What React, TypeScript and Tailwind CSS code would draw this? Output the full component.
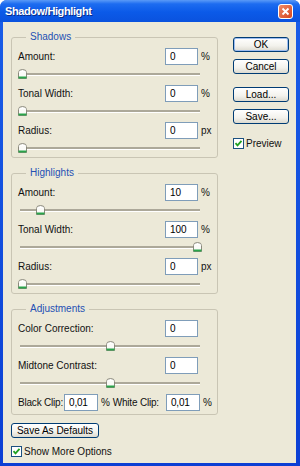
import React from "react";

const font = { fontFamily: '"Liberation Sans", Arial, sans-serif' };

function Thumb({ pct }: { pct: number }) {
  return (
    <svg
      className="absolute top-[4px]"
      style={{ left: (pct * 175) / 100 }}
      width="9"
      height="10"
      viewBox="0 0 9 10"
    >
      <path d="M0.5 9.5 V3.5 Q0.5 0.5 4.5 0.5 Q8.5 0.5 8.5 3.5 V9.5 Z" fill="#fbfbf8" stroke="#8a897c" />
      <rect x="0.5" y="7.5" width="8" height="2" fill="#2aa44a" />
      <rect x="1.5" y="2" width="6" height="1" fill="#ffffff" />
    </svg>
  );
}

function Slider({ pct }: { pct: number }) {
  return (
    <div className="relative h-[18px] w-[184px]">
      <div className="mx-[2px] mt-[8px] h-[3px] border-b border-white bg-[#aca899]" />
      <Thumb pct={pct} />
    </div>
  );
}

function Field({ value, w = "w-[33px]" }: { value: string; w?: string }) {
  return (
    <div className={`${w} flex h-[17px] shrink-0 items-center border border-[#7f9db9] bg-white pl-[4px] text-[10px] text-black`}>
      {value}
    </div>
  );
}

function Item({ label, value, unit, pct }: { label: string; value: string; unit?: string; pct: number }) {
  return (
    <div className="flex flex-col">
      <div className="flex h-[17px] items-center">
        <span className="flex-1 text-[10px] text-[#111]">{label}</span>
        <Field value={value} />
        <span className="w-[19px] pl-[3px] text-[10px] text-[#111]">{unit}</span>
      </div>
      <Slider pct={pct} />
    </div>
  );
}

function Group({ title, children, last }: { title: string; children: React.ReactNode; last?: boolean }) {
  return (
    <fieldset className={`rounded-[3px] border border-[#c9c5b4] pl-[6px] ${last ? "pb-[3px]" : ""}`}>
      <legend className="ml-[8px] px-[4px] text-[10px] leading-[12px] text-[#2450b4]">{title}</legend>
      <div className="mt-[5px] flex flex-col gap-[2px]">{children}</div>
    </fieldset>
  );
}

function Button({ label, def, w = "w-[56px]" }: { label: string; def?: boolean; w?: string }) {
  return (
    <div
      className={`${w} flex h-[15px] items-center justify-center rounded-[3px] border border-[#003c74] bg-[linear-gradient(to_bottom,#ffffff,#f3f2ec_60%,#dcdad0)] text-[10px] text-black ${
        def ? "shadow-[inset_0_0_0_1px_#9dbdf0]" : ""
      }`}
    >
      {label}
    </div>
  );
}

function Check({ label }: { label: string }) {
  return (
    <div className="flex items-center gap-[2px]">
      <div className="flex h-[11px] w-[11px] items-center justify-center border border-[#1c5180] bg-white">
        <svg width="9" height="9" viewBox="0 0 9 9">
          <path d="M1.5 4.2 L3.5 6.3 L7.5 1.8" fill="none" stroke="#21a121" strokeWidth="1.8" />
        </svg>
      </div>
      <span className="text-[10px] text-[#111]">{label}</span>
    </div>
  );
}

export default function App() {
  return (
    <div
      className="flex h-[466px] w-[300px] flex-col overflow-hidden rounded-t-[7px] bg-[linear-gradient(to_bottom,#1a5ee8,#0b3fd4)]"
      style={font}
    >
      <div className="flex h-[22px] items-center justify-between bg-[linear-gradient(to_bottom,#5a9af7_0%,#1d6cf0_18%,#0b5ae8_55%,#0a52de_100%)] pl-[5px] pr-[7px]">
        <span className="text-[11px] font-bold tracking-[-0.4px] text-white [text-shadow:1px_1px_0_#0a2c8a]">
          Shadow/Highlight
        </span>
        <div className="flex h-[15px] w-[15px] items-center justify-center rounded-[3px] border border-white bg-[linear-gradient(135deg,#f08a66,#d5461f)]">
          <svg width="9" height="9" viewBox="0 0 9 9">
            <path d="M1.5 1.5 L7.5 7.5 M7.5 1.5 L1.5 7.5" stroke="white" strokeWidth="1.8" />
          </svg>
        </div>
      </div>
      <div className="mb-[3px] ml-[3px] mr-[4px] flex flex-1 gap-[15px] bg-[#ece9d8] pl-[8px] pt-[9px]">
        <div className="flex w-[207px] flex-col">
          <Group title="Shadows">
            <Item label="Amount:" value="0" unit="%" pct={0} />
            <Item label="Tonal Width:" value="0" unit="%" pct={0} />
            <Item label="Radius:" value="0" unit="px" pct={0} />
          </Group>
          <div className="mt-[9px]">
            <Group title="Highlights">
              <Item label="Amount:" value="10" unit="%" pct={10} />
              <Item label="Tonal Width:" value="100" unit="%" pct={100} />
              <Item label="Radius:" value="0" unit="px" pct={0} />
            </Group>
          </div>
          <div className="mt-[9px]">
            <Group title="Adjustments" last>
              <Item label="Color Correction:" value="0" pct={50} />
              <Item label="Midtone Contrast:" value="0" pct={50} />
              <div className="flex h-[17px] items-center whitespace-nowrap text-[10px] tracking-[-0.2px] text-[#111]">
                <span className="pr-[1px]">Black Clip:</span>
                <Field value="0,01" w="w-[34px]" />
                <span className="pl-[3px] pr-[3px]">%</span>
                <span className="flex-1">White Clip:</span>
                <Field value="0,01" w="w-[34px]" />
                <span className="w-[17px] pl-[3px]">%</span>
              </div>
            </Group>
          </div>
          <div className="mt-[8px]">
            <Button label="Save As Defaults" w="w-[88px]" />
          </div>
          <div className="mt-[6px]">
            <Check label="Show More Options" />
          </div>
        </div>
        <div className="mt-[6px] flex w-[56px] flex-col">
          <Button label="OK" def />
          <div className="mt-[7px]">
            <Button label="Cancel" />
          </div>
          <div className="mt-[13px]">
            <Button label="Load..." />
          </div>
          <div className="mt-[7px]">
            <Button label="Save..." />
          </div>
          <div className="mt-[12px]">
            <Check label="Preview" />
          </div>
        </div>
      </div>
    </div>
  );
}
